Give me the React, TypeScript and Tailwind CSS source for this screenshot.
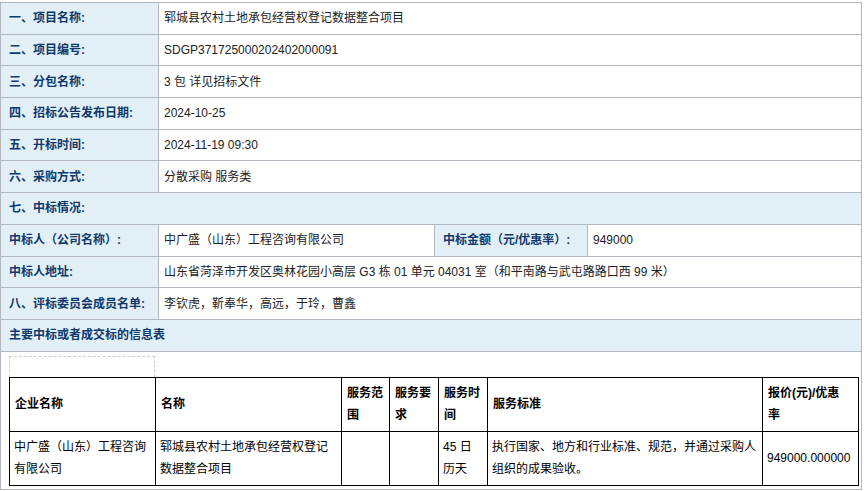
export default function App() {
  const L = "border border-[#b3b8bf] bg-[#e3eff7] text-[#0e3a6b] font-bold px-[8px] h-[31.7px] whitespace-nowrap";
  const V = "border border-[#b3b8bf] bg-white text-[#222] px-[5px] h-[31.7px]";
  const H = "border border-black font-bold text-left align-middle px-[5px] py-[3px] leading-[22px]";
  const D = "border border-black text-left align-middle px-[4px] py-[3px] leading-[22px]";
  return (
    <div className="bg-white w-[868px] h-[491px] pt-[2px] text-[12px]" style={{ fontFamily: '"Liberation Sans","Noto Sans CJK SC",sans-serif' }}>
      <table className="border-collapse w-[862px] table-fixed">
        <colgroup>
          <col className="w-[158px]" />
          <col className="w-[276px]" />
          <col className="w-[153px]" />
          <col />
        </colgroup>
        <tbody>
          <tr><td className={L}>一、项目名称:</td><td className={V} colSpan={3}>郓城县农村土地承包经营权登记数据整合项目</td></tr>
          <tr><td className={L}>二、项目编号:</td><td className={V} colSpan={3}>SDGP371725000202402000091</td></tr>
          <tr><td className={L}>三、分包名称:</td><td className={V} colSpan={3}>3 包 详见招标文件</td></tr>
          <tr><td className={L}>四、招标公告发布日期:</td><td className={V} colSpan={3}>2024-10-25</td></tr>
          <tr><td className={L}>五、开标时间:</td><td className={V} colSpan={3}>2024-11-19 09:30</td></tr>
          <tr><td className={L}>六、采购方式:</td><td className={V} colSpan={3}>分散采购 服务类</td></tr>
          <tr><td className={L} colSpan={4}>七、中标情况:</td></tr>
          <tr>
            <td className={L}>中标人（公司名称）:</td><td className={V}>中广盛（山东）工程咨询有限公司</td>
            <td className={L}>中标金额（元/优惠率）:</td><td className={V}>949000</td>
          </tr>
          <tr><td className={L}>中标人地址:</td><td className={V} colSpan={3}>山东省菏泽市开发区奥林花园小高层 G3 栋 01 单元 04031 室（和平南路与武屯路路口西 99 米）</td></tr>
          <tr><td className={L}>八、评标委员会成员名单:</td><td className={V} colSpan={3}>李钦虎，靳奉华，高远，于玲，曹鑫</td></tr>
          <tr><td className={L} colSpan={4}>主要中标或者成交标的信息表</td></tr>
          <tr>
            <td colSpan={4} className="border border-[#b3b8bf] bg-white px-[8px] pt-[4px] pb-[3px]">
              <div className="w-[146px] h-[21px] border border-dashed border-[#cccccc] border-b-0"></div>
              <table className="border-collapse w-[850px] table-fixed text-black">
                <colgroup>
                  <col className="w-[146px]" /><col className="w-[186px]" /><col className="w-[48px]" /><col className="w-[49px]" /><col className="w-[49px]" /><col className="w-[275px]" /><col />
                </colgroup>
                <tbody>
                  <tr className="h-[54px]">
                    <th className={H}>企业名称</th><th className={H}>名称</th><th className={H}>服务范围</th><th className={H}>服务要求</th><th className={H}>服务时间</th><th className={H}>服务标准</th><th className={H}>报价(元)/优惠 率</th>
                  </tr>
                  <tr className="h-[54px]">
                    <td className={D}>中广盛（山东）工程咨询有限公司</td><td className={D}>郓城县农村土地承包经营权登记数据整合项目</td><td className={D}></td><td className={D}></td><td className={D}>45 日历天</td><td className={D}>执行国家、地方和行业标准、规范，并通过采购人组织的成果验收。</td><td className={D}>949000.000000</td>
                  </tr>
                </tbody>
              </table>
            </td>
          </tr>
        </tbody>
      </table>
    </div>
  );
}
